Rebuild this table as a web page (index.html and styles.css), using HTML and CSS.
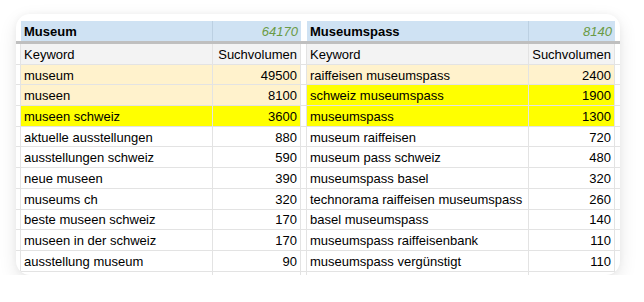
FILE: index.html
```html
<!DOCTYPE html>
<html>
<head>
<meta charset="utf-8">
<link rel="stylesheet" href="styles.css">
</head>
<body>
<div class="card">
  <div class="row head">
    <div class="c sp"></div>
    <div class="c k1 blue b">Museum</div>
    <div class="c v1 blue num green">64170</div>
    <div class="c gap"></div>
    <div class="c k2 blue b">Museumspass</div>
    <div class="c v2 blue num green">8140</div>
    <div class="c rest"></div>
  </div>
  <div class="band"></div>
  <div class="row">
    <div class="c sp"></div>
    <div class="c k1 grey">Keyword</div>
    <div class="c v1 grey num">Suchvolumen</div>
    <div class="c gap"></div>
    <div class="c k2 grey">Keyword</div>
    <div class="c v2 grey num">Suchvolumen</div>
    <div class="c rest"></div>
  </div>
  <div class="row">
    <div class="c sp"></div>
    <div class="c k1 cream">museum</div>
    <div class="c v1 cream num">49500</div>
    <div class="c gap"></div>
    <div class="c k2 cream">raiffeisen museumspass</div>
    <div class="c v2 cream num">2400</div>
    <div class="c rest"></div>
  </div>
  <div class="row">
    <div class="c sp"></div>
    <div class="c k1 cream">museen</div>
    <div class="c v1 cream num">8100</div>
    <div class="c gap"></div>
    <div class="c k2 yellow">schweiz museumspass</div>
    <div class="c v2 yellow num">1900</div>
    <div class="c rest"></div>
  </div>
  <div class="row">
    <div class="c sp"></div>
    <div class="c k1 yellow">museen schweiz</div>
    <div class="c v1 yellow num">3600</div>
    <div class="c gap"></div>
    <div class="c k2 yellow">museumspass</div>
    <div class="c v2 yellow num">1300</div>
    <div class="c rest"></div>
  </div>
  <div class="row">
    <div class="c sp"></div>
    <div class="c k1">aktuelle ausstellungen</div>
    <div class="c v1 num">880</div>
    <div class="c gap"></div>
    <div class="c k2">museum raiffeisen</div>
    <div class="c v2 num">720</div>
    <div class="c rest"></div>
  </div>
  <div class="row">
    <div class="c sp"></div>
    <div class="c k1">ausstellungen schweiz</div>
    <div class="c v1 num">590</div>
    <div class="c gap"></div>
    <div class="c k2">museum pass schweiz</div>
    <div class="c v2 num">480</div>
    <div class="c rest"></div>
  </div>
  <div class="row">
    <div class="c sp"></div>
    <div class="c k1">neue museen</div>
    <div class="c v1 num">390</div>
    <div class="c gap"></div>
    <div class="c k2">museumspass basel</div>
    <div class="c v2 num">320</div>
    <div class="c rest"></div>
  </div>
  <div class="row">
    <div class="c sp"></div>
    <div class="c k1">museums ch</div>
    <div class="c v1 num">320</div>
    <div class="c gap"></div>
    <div class="c k2">technorama raiffeisen museumspass</div>
    <div class="c v2 num">260</div>
    <div class="c rest"></div>
  </div>
  <div class="row">
    <div class="c sp"></div>
    <div class="c k1">beste museen schweiz</div>
    <div class="c v1 num">170</div>
    <div class="c gap"></div>
    <div class="c k2">basel museumspass</div>
    <div class="c v2 num">140</div>
    <div class="c rest"></div>
  </div>
  <div class="row">
    <div class="c sp"></div>
    <div class="c k1">museen in der schweiz</div>
    <div class="c v1 num">170</div>
    <div class="c gap"></div>
    <div class="c k2">museumspass raiffeisenbank</div>
    <div class="c v2 num">110</div>
    <div class="c rest"></div>
  </div>
  <div class="row">
    <div class="c sp"></div>
    <div class="c k1">ausstellung museum</div>
    <div class="c v1 num">90</div>
    <div class="c gap"></div>
    <div class="c k2">museumspass vergünstigt</div>
    <div class="c v2 num">110</div>
    <div class="c rest"></div>
  </div>
  <div class="row last">
    <div class="c sp"></div>
    <div class="c k1"></div>
    <div class="c v1"></div>
    <div class="c gap"></div>
    <div class="c k2"></div>
    <div class="c v2"></div>
    <div class="c rest"></div>
  </div>
</div>
</body>
</html>
```
FILE: styles.css
```css
html, body {
  margin: 0;
  padding: 0;
  background: #ffffff;
}
body {
  font-family: "Liberation Sans", Arial, sans-serif;
  font-size: 13px;
  color: #000;
}
.card {
  margin: 14px 0 0 16px;
  width: 604px;
  height: 261px;
  padding-top: 7px;
  box-sizing: border-box;
  background: #fff;
  border-radius: 14px;
  overflow: hidden;
  box-shadow: 0 6px 18px rgba(0, 0, 0, 0.10), 0 0 6px rgba(0, 0, 0, 0.04);
}
.row {
  display: flex;
  height: 20.7px;
  box-sizing: border-box;
  border-bottom: 1px solid #e3e3e3;
}
.row.head {
  height: 20px;
  border-bottom: none;
}
.row.last {
  height: 10px;
  border-bottom: none;
}
.band {
  height: 3px;
  background: #bfbfbf;
}
.c {
  box-sizing: border-box;
  height: 100%;
  display: flex;
  align-items: center;
  padding: 1px 3px 0 3px;
  white-space: nowrap;
  overflow: hidden;
  border-right: 1px solid #e3e3e3;
}
.sp { width: 5px; padding: 0; }
.k1 { width: 192px; }
.v1 { width: 88px; }
.gap { width: 6px; padding: 0; }
.k2 { width: 222px; }
.v2 { width: 86px; }
.rest { flex: 1; border-right: none; padding: 0; }
.head .sp, .head .gap, .head .v1, .head .v2 { border-right: none; }
.head .k1, .head .k2 { border-right: 1px solid #bcd0e2; }
.num { justify-content: flex-end; }
.b { font-weight: bold; }
.blue { background: #cfe2f3; }
.green { color: #6a9a45; font-style: italic; }
.grey { background: #f3f3f3; }
.cream { background: #fff2cc; }
.yellow { background: #ffff00; }
```
